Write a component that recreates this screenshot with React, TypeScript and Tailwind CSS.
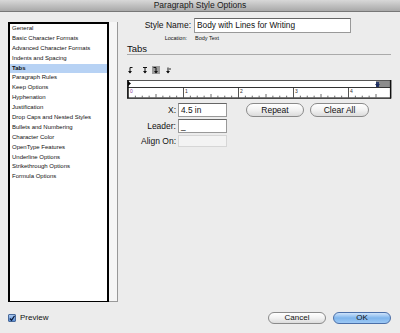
import React from "react";

const items = [
  "General",
  "Basic Character Formats",
  "Advanced Character Formats",
  "Indents and Spacing",
  "Tabs",
  "Paragraph Rules",
  "Keep Options",
  "Hyphenation",
  "Justification",
  "Drop Caps and Nested Styles",
  "Bullets and Numbering",
  "Character Color",
  "OpenType Features",
  "Underline Options",
  "Strikethrough Options",
  "Formula Options",
];

function Ruler() {
  const ticks: React.ReactNode[] = [];
  for (let i = 0; i <= 36; i++) {
    const x = 1.5 + (i * 55) / 8;
    if (x > 262) break;
    const m = i % 8;
    if (m === 0) {
      if (i > 0) ticks.push(<line key={i} x1={x} y1={8} x2={x} y2={18} stroke="#555" strokeWidth={1} />);
      continue;
    }
    const h = m === 4 ? 3.5 : 1.8;
    ticks.push(<line key={i} x1={x} y1={17.5 - h} x2={x} y2={17.5} stroke="#444" strokeWidth={0.8} />);
  }
  const nums = [0, 1, 2, 3, 4];
  return (
    <svg width={265} height={19} viewBox="0 0 265 19" className="block">
      <rect x={0.5} y={0.5} width={263.5} height={17.5} fill="#fff" stroke="#555" />
      <rect x={249} y={1} width={15} height={6.5} fill="#8c8c8c" />
      <line x1={0.5} y1={7.5} x2={264} y2={7.5} stroke="#333" strokeWidth={1} />
      <line x1={1} y1={0} x2={1} y2={18} stroke="#111" strokeWidth={1.5} />
      <line x1={263.5} y1={0} x2={263.5} y2={18.5} stroke="#111" strokeWidth={1.2} />
      <line x1={0} y1={18.2} x2={264} y2={18.2} stroke="#222" strokeWidth={1} />
      <polygon points="1,1 4,3.5 1,6" fill="#000" />
      <rect x={249} y={2} width={3} height={5} fill="#2a3a6a" />
      <polygon points="248,4 253,4 250.5,7" fill="#1c2c5c" />
      {ticks}
      {nums.map((n) => (
        <text key={n} x={3 + n * 55} y={13} fontSize={5} fill={n === 0 ? "#8a3a9a" : "#333"} fontFamily="Liberation Sans, Arial, sans-serif">
          {n}
        </text>
      ))}
    </svg>
  );
}

function TabIcon({ kind }: { kind: "left" | "center" | "right" | "decimal" }) {
  return (
    <svg width={6} height={7} viewBox="0 0 6 7">
      <line x1={3} y1={0.5} x2={3} y2={6} stroke="#111" strokeWidth={1} />
      <polygon points="1,4 5,4 3,6.5" fill="#111" />
      {kind === "left" && <line x1={3} y1={0.5} x2={5.5} y2={0.5} stroke="#111" strokeWidth={1} />}
      {kind === "right" && <line x1={0.5} y1={0.5} x2={3} y2={0.5} stroke="#111" strokeWidth={1} />}
      {kind === "center" && <line x1={1} y1={0.5} x2={5} y2={0.5} stroke="#111" strokeWidth={1} />}
      {kind === "decimal" && <circle cx={5} cy={2} r={0.8} fill="#111" />}
    </svg>
  );
}

export default function App() {
  const font = { fontFamily: '"Liberation Sans", Arial, sans-serif' };
  return (
    <div className="w-[400px] h-[333px] bg-[#ececec] flex flex-col overflow-hidden text-[#111]" style={font}>
      {/* title bar */}
      <div className="h-[12px] bg-gradient-to-b from-[#d8d8d8] to-[#a9a9a9] border-b border-[#777] flex items-center justify-center">
        <span className="text-[8.5px] leading-none text-[#1a1a1a]">Paragraph Style Options</span>
      </div>

      <div className="flex h-[290px]">
        {/* left list */}
        <div className="ml-[8px] mt-[10px] h-[280px] flex">
          <div className="w-[101px] h-full bg-white border-2 border-black border-b-[1.5px] pt-[0px]">
            {items.map((t) => (
              <div
                key={t}
                className={`h-[9.9px] pl-[2px] text-[6px] leading-[9.9px] whitespace-nowrap ${t === "Tabs" ? "bg-[#b7d2f4] font-bold" : ""}`}
              >
                {t}
              </div>
            ))}
          </div>
          <div className="w-[9px] h-full bg-[#f6f6f6] border-r border-b border-[#999]" />
        </div>

        {/* right panel */}
        <div className="ml-[9px] w-[264px] flex flex-col">
          <div className="mt-[6px] flex items-center">
            <div className="w-[64px] text-right text-[8.5px] leading-none">Style Name:</div>
            <div className="ml-[3px] w-[157px] h-[15px] bg-white border border-[#999] border-t-[#666] flex items-center pl-[2px] text-[8.3px]">
              Body with Lines for Writing
            </div>
          </div>
          <div className="mt-[3px] flex items-center text-[5.5px] leading-none">
            <div className="w-[60px] text-right">Location:</div>
            <div className="ml-[8px]">Body Text</div>
          </div>
          <div className="mt-[2px] text-[9.5px] leading-none pb-[1px] border-b border-[#aaa]">Tabs</div>
          <div className="mt-[11px] flex items-center h-[8px]">
            <div className="ml-[0px] w-[6px]"><TabIcon kind="left" /></div>
            <div className="ml-[9px] w-[6px]"><TabIcon kind="center" /></div>
            <div className="ml-[4px] w-[8px] h-[8px] bg-[#9c9c9c] flex items-center justify-center"><TabIcon kind="right" /></div>
            <div className="ml-[5px] w-[6px]"><TabIcon kind="decimal" /></div>
          </div>
          <div className="mt-[6px]">
            <Ruler />
          </div>

          <div className="mt-[4px] flex">
            <div className="flex flex-col gap-[2px]">
              {[
                ["X:", "4.5 in", false],
                ["Leader:", "_", false],
                ["Align On:", "", true],
              ].map(([label, val, dis]) => (
                <div key={label as string} className="flex items-center">
                  <div className="w-[49px] text-right text-[8.5px] leading-none">{label}</div>
                  <div
                    className={`ml-[2px] w-[49px] ${dis ? "h-[12px] bg-[#f3f3f3] border border-[#d6d6d6]" : "h-[14px] bg-white border border-[#999] border-t-[#666]"} flex items-center pl-[2px] text-[8.3px]`}
                  >
                    {val as string}
                  </div>
                </div>
              ))}
            </div>
            <div className="ml-[19px] flex gap-[6px] h-[14px]">
              <div className="w-[58px] h-[14px] rounded-full border border-[#8a8a8a] bg-gradient-to-b from-[#ffffff] via-[#f2f2f2] to-[#dcdcdc] flex items-center justify-center text-[8.5px]">
                Repeat
              </div>
              <div className="w-[59px] h-[14px] rounded-full border border-[#8a8a8a] bg-gradient-to-b from-[#ffffff] via-[#f2f2f2] to-[#dcdcdc] flex items-center justify-center text-[8.5px]">
                Clear All
              </div>
            </div>
          </div>
        </div>
      </div>

      {/* bottom */}
      <div className="flex items-center h-[31px] pt-[1px]">
        <div className="ml-[8px] flex items-center">
          <div className="w-[8px] h-[8px] bg-gradient-to-b from-[#a9c8f0] to-[#5b8fd6] border border-[#4a6a9a] rounded-[1px] flex items-center justify-center">
            <svg width={7} height={7} viewBox="0 0 7 7">
              <path d="M1 3.5 L3 5.5 L6.5 0.5" stroke="#0a1a3a" strokeWidth={1.4} fill="none" />
            </svg>
          </div>
          <span className="ml-[4px] text-[8px] leading-none">Preview</span>
        </div>
        <div className="ml-auto mr-[9px] flex gap-[7px]">
          <div className="w-[58px] h-[12px] rounded-full border border-[#8a8a8a] bg-gradient-to-b from-[#ffffff] via-[#f2f2f2] to-[#dcdcdc] flex items-center justify-center text-[8px]">
            Cancel
          </div>
          <div className="w-[58px] h-[12px] rounded-full border border-[#4b6fa8] bg-gradient-to-b from-[#cfe4fb] via-[#7fb5ec] to-[#9cc8f5] flex items-center justify-center text-[8px]">
            OK
          </div>
        </div>
      </div>
    </div>
  );
}
